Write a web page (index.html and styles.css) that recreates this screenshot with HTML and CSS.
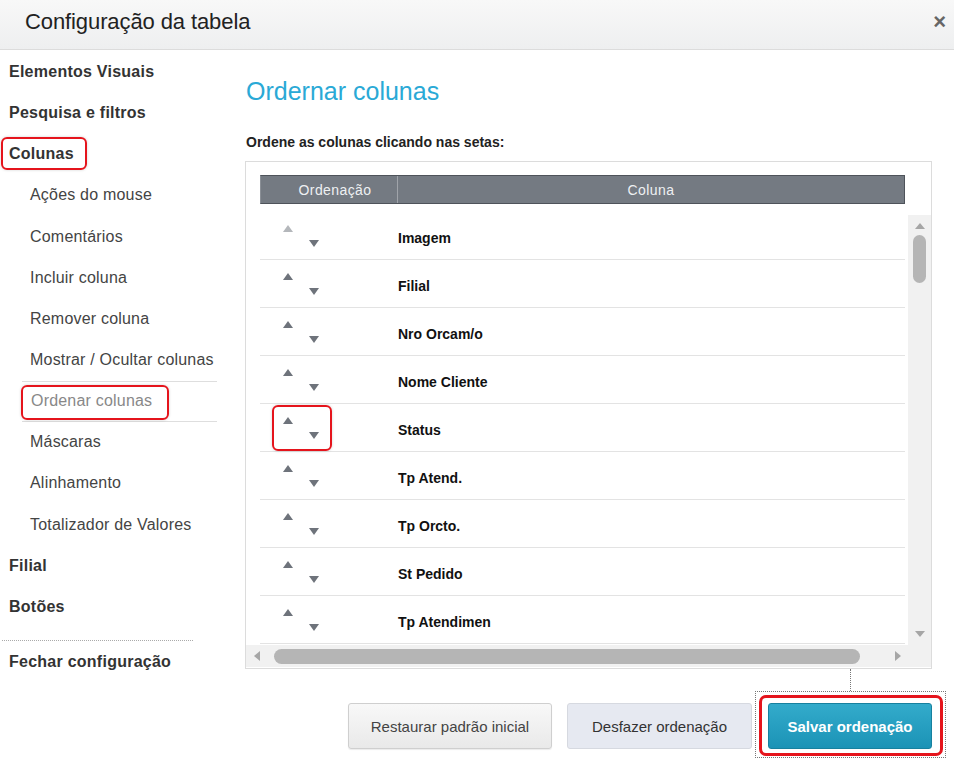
FILE: index.html
```html
<!DOCTYPE html>
<html lang="pt">
<head>
<meta charset="utf-8">
<title>Configuração da tabela</title>
<link rel="stylesheet" href="styles.css">
</head>
<body>
<div class="dialog">
  <div class="header">
    <div class="title">Configuração da tabela</div>
    <div class="close">×</div>
  </div>
  <div class="body">
    <nav class="sidebar">
      <div class="nav-item">Elementos Visuais</div>
      <div class="nav-item">Pesquisa e filtros</div>
      <div class="nav-item hl-parent"><span>Colunas</span><span class="hl hl-colunas"></span></div>
      <div class="nav-item sub">Ações do mouse</div>
      <div class="nav-item sub">Comentários</div>
      <div class="nav-item sub">Incluir coluna</div>
      <div class="nav-item sub">Remover coluna</div>
      <div class="nav-item sub">Mostrar / Ocultar colunas</div>
      <div class="nav-item sub active"><span>Ordenar colunas</span><span class="hl hl-ordenar"></span></div>
      <div class="nav-item sub">Máscaras</div>
      <div class="nav-item sub">Alinhamento</div>
      <div class="nav-item sub">Totalizador de Valores</div>
      <div class="nav-item">Filial</div>
      <div class="nav-item">Botões</div>
      <div class="nav-sep"></div>
      <div class="nav-item">Fechar configuração</div>
    </nav>
    <main class="main">
      <h1 class="heading">Ordernar colunas</h1>
      <p class="instr">Ordene as colunas clicando nas setas:</p>
      <div class="tablebox">
        <div class="thead">
          <div class="th th-ord">Ordenação</div>
          <div class="th th-col">Coluna</div>
        </div>
        <div class="scrollrow">
          <div class="rows">
            <div class="row"><div class="ord"><span class="up disabled"></span><span class="down"></span></div><div class="col">Imagem</div></div>
            <div class="row"><div class="ord"><span class="up"></span><span class="down"></span></div><div class="col">Filial</div></div>
            <div class="row"><div class="ord"><span class="up"></span><span class="down"></span></div><div class="col">Nro Orcam/o</div></div>
            <div class="row"><div class="ord"><span class="up"></span><span class="down"></span></div><div class="col">Nome Cliente</div></div>
            <div class="row"><div class="ord"><span class="up"></span><span class="down"></span><span class="hl hl-status"></span></div><div class="col">Status</div></div>
            <div class="row"><div class="ord"><span class="up"></span><span class="down"></span></div><div class="col">Tp Atend.</div></div>
            <div class="row"><div class="ord"><span class="up"></span><span class="down"></span></div><div class="col">Tp Orcto.</div></div>
            <div class="row"><div class="ord"><span class="up"></span><span class="down"></span></div><div class="col">St Pedido</div></div>
            <div class="row"><div class="ord"><span class="up"></span><span class="down"></span></div><div class="col">Tp Atendimen</div></div>
          </div>
          <div class="vscroll">
            <span class="sb-up"></span>
            <span class="vthumb"></span>
            <span class="sb-down"></span>
          </div>
        </div>
        <div class="hscroll">
          <span class="sb-left"></span>
          <span class="hthumb"></span>
          <span class="sb-right"></span>
        </div>
      </div>
      <div class="actions">
        <button class="btn btn-default">Restaurar padrão inicial</button>
        <button class="btn btn-light">Desfazer ordenação</button>
        <div class="focus-wrap">
          <span class="dot-line"></span>
          <button class="btn btn-primary">Salvar ordenação</button>
        </div>
      </div>
    </main>
  </div>
</div>
</body>
</html>
```

FILE: styles.css
```css
* { box-sizing: border-box; }
html, body { margin: 0; padding: 0; background: #fff; }
body { font-family: "Liberation Sans", Arial, sans-serif; color: #333; }

.dialog { width: 954px; height: 770px; overflow: hidden; background: #fff; }

.header {
  height: 50px;
  display: flex;
  align-items: center;
  justify-content: space-between;
  padding: 0 8px 6px 25px;
  background: linear-gradient(#f8f8f8, #eeeff0);
  border-bottom: 1px solid #dcdcdc;
}
.title { font-size: 22px; color: #222; letter-spacing: -0.1px; }
.close { font-size: 22px; font-weight: bold; color: #666; line-height: 1; }

.body { display: flex; }

.sidebar { width: 230px; padding-top: 1.5px; }
.nav-item {
  position: relative;
  height: 41.15px;
  display: flex;
  align-items: center;
  padding-left: 9px;
  font-size: 16px;
  letter-spacing: 0.25px;
  font-weight: bold;
  color: #333;
}
.nav-item.sub { padding-left: 30px; font-weight: normal; color: #444; letter-spacing: 0.2px; }
.nav-item.sub.active {
  margin-left: 22px;
  width: 195px;
  padding-left: 9px;
  color: #888;
  border-top: 1px solid #dedede;
  border-bottom: 1px solid #dedede;
}
.nav-sep { margin: 13px 0 0 2px; width: 191px; border-top: 1px dotted #aaa; height: 0; }

.hl {
  position: absolute;
  border: 2px solid #e5141c;
  border-radius: 6px;
  box-shadow: 0 0 3px rgba(0,0,0,0.18);
  pointer-events: none;
}
.hl-colunas { left: 1px; top: 3px; width: 86px; height: 33px; }
.hl-ordenar { left: -1px; top: 3px; width: 148px; height: 35px; }
.hl-status { left: 12px; top: 1px; width: 60px; height: 46px; }

.main { flex: 1; padding: 0 22px 0 15px; }
.heading {
  margin: 27px 0 0 1px;
  font-size: 25px;
  line-height: 28px;
  font-weight: normal;
  color: #2aa9d6;
}
.instr { margin: 29px 0 0 1px; font-size: 14px; line-height: 16px; font-weight: bold; color: #222; }

.tablebox { margin-top: 11px; border: 1px solid #dcdcdc; height: 508px; padding-top: 13px; }
.thead {
  margin-left: 14px;
  width: 645px;
  height: 29px;
  display: flex;
  background: #747a82;
  border: 1px solid #4e535a;
  border-left-color: #8a8f96;
  color: #eef0f2;
  font-size: 14px;
  letter-spacing: 0.4px;
}
.th { display: flex; align-items: center; justify-content: center; }
.th-ord { width: 137px; padding-left: 12px; border-right: 1px solid #a0a4aa; }
.th-col { flex: 1; }

.scrollrow { display: flex; height: 441px; }
.rows { margin-left: 14px; width: 645px; padding-top: 8px; overflow: hidden; }
.row { display: flex; height: 48px; border-bottom: 1px solid #e3e3e3; }
.ord { position: relative; width: 138px; display: flex; align-items: flex-start; }
.up {
  margin: 13px 0 0 23px;
  width: 0; height: 0;
  border-left: 5px solid transparent;
  border-right: 5px solid transparent;
  border-bottom: 7px solid #6e737b;
}
.up.disabled { border-bottom-color: #b4b7bb; }
.down {
  margin: 28px 0 0 16px;
  width: 0; height: 0;
  border-left: 5px solid transparent;
  border-right: 5px solid transparent;
  border-top: 7px solid #6e737b;
}
.col { padding-top: 18px; font-size: 14px; line-height: 17px; font-weight: bold; color: #111; }

.vscroll {
  margin: 11px 0 0 3px;
  width: 23px;
  height: 430px;
  background: #f1f1f1;
  display: flex;
  flex-direction: column;
  align-items: center;
}
.sb-up {
  margin-top: 8px;
  width: 0; height: 0;
  border-left: 5px solid transparent;
  border-right: 5px solid transparent;
  border-bottom: 6px solid #a6a6a6;
}
.vthumb { margin-top: 6px; width: 13px; height: 48px; border-radius: 7px; background: #b5b5b5; }
.sb-down {
  margin-top: auto;
  margin-bottom: 8px;
  width: 0; height: 0;
  border-left: 5px solid transparent;
  border-right: 5px solid transparent;
  border-top: 6px solid #a6a6a6;
}

.hscroll {
  height: 22px;
  background: #f1f1f1;
  display: flex;
  align-items: center;
  padding-left: 8px;
}
.sb-left {
  width: 0; height: 0;
  border-top: 5px solid transparent;
  border-bottom: 5px solid transparent;
  border-right: 6px solid #a6a6a6;
}
.hthumb { margin-left: 14px; width: 586px; height: 15px; border-radius: 8px; background: #b5b5b5; }
.sb-right {
  margin-left: 35px;
  width: 0; height: 0;
  border-top: 5px solid transparent;
  border-bottom: 5px solid transparent;
  border-left: 6px solid #a6a6a6;
}

.actions { margin-top: 34px; display: flex; justify-content: flex-end; align-items: flex-start; }
.btn {
  height: 46px;
  padding: 0;
  font-family: "Liberation Sans", Arial, sans-serif;
  font-size: 15px;
  border-radius: 3px;
  cursor: pointer;
}
.btn-default {
  width: 204px;
  color: #444;
  background: linear-gradient(#f8f8f8, #e9e9e9);
  border: 1px solid #cfcfcf;
  box-shadow: 0 1px 1px rgba(0,0,0,0.08);
}
.btn-light {
  margin-left: 15px;
  width: 185px;
  color: #333;
  background: #e6e9f1;
  border: 1px solid #d6d9e0;
}
.focus-wrap { position: relative; margin-left: 16px; }
.btn-primary {
  width: 164px;
  color: #fff;
  font-weight: bold;
  background: linear-gradient(#33abcb, #1b93b6);
  border: 1px solid #17819f;
  outline: none;
}
.focus-wrap::before {
  content: "";
  position: absolute;
  left: -13px; top: -12px; right: -14px; bottom: -9px;
  border: 1px dotted #777;
  pointer-events: none;
}
.focus-wrap::after {
  content: "";
  position: absolute;
  left: -9px; top: -8px; right: -11px; bottom: -7px;
  border: 3px solid #e5141c;
  border-radius: 7px;
  pointer-events: none;
}
.dot-line {
  position: absolute;
  left: 82px;
  top: -34px;
  height: 22px;
  border-left: 1px dotted #777;
}
```
